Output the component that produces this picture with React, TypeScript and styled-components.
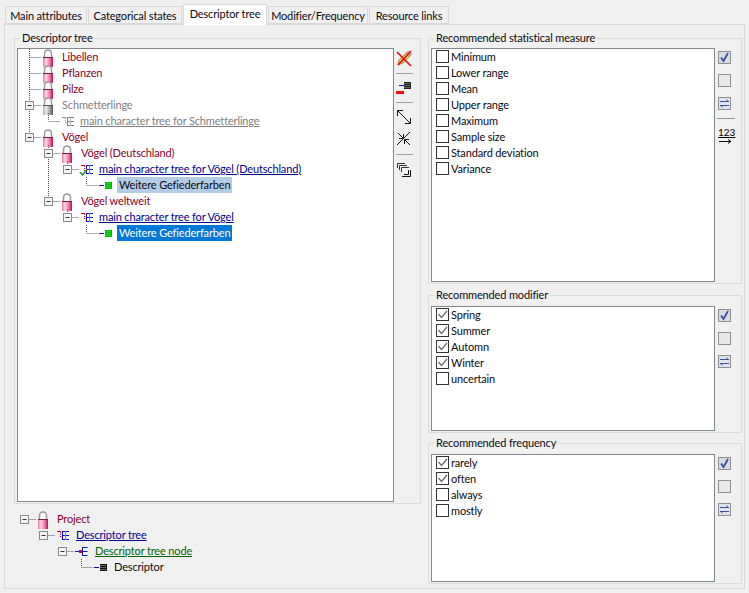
import React, { useId } from 'react';
import styled, { createGlobalStyle } from 'styled-components';

const GlobalStyle = createGlobalStyle`
  html, body { margin: 0; padding: 0; background: #f0f0f0; }
  body { font-family: Lato, "Liberation Sans", sans-serif; font-size: 11px; letter-spacing: -0.15px; color: #0a0a14; overflow: hidden; }
`;

const Window = styled.div`
  width: 749px;
  height: 593px;
  padding: 3px 4px 0 4px;
  box-sizing: border-box;
  background: #f0f0f0;
`;

const TabStrip = styled.div`
  display: flex;
  align-items: flex-end;
  height: 21px;
  padding-left: 1px;
  position: relative;
  z-index: 1;
`;

const Tab = styled.div<{ $active?: boolean; $width: number }>`
  width: ${(p) => p.$width}px;
  height: ${(p) => (p.$active ? 21 : 18)}px;
  line-height: ${(p) => (p.$active ? 18 : 17)}px;
  text-align: center;
  box-sizing: border-box;
  flex: none;
  border: 1px solid #d9d9d9;
  border-bottom: ${(p) => (p.$active ? 'none' : '1px solid #d9d9d9')};
  margin-right: 1px;
  background: ${(p) => (p.$active ? '#ffffff' : '#f0f0f0')};
  white-space: nowrap;
  margin-bottom: ${(p) => (p.$active ? -1 : 0)}px;
`;

const TabPanel = styled.div`
  width: 741px;
  height: 565px;
  box-sizing: border-box;
  border: 1px solid #d9d9d9;
  display: grid;
  grid-template-columns: 407px 314px;
  column-gap: 7px;
  padding: 13px 3px 0 9px;
  align-items: start;
`;

const Column = styled.div`
  display: flex;
  flex-direction: column;
`;

const Group = styled.section<{ $height: number; $after?: number }>`
  height: ${(p) => p.$height}px;
  margin-bottom: ${(p) => p.$after ?? 0}px;
  box-sizing: border-box;
  border: 1px solid #dcdcdc;
  display: flex;
  flex-direction: column;
`;

const GroupTitle = styled.div`
  align-self: flex-start;
  margin: -8px 0 0 5px;
  padding: 0 2px;
  height: 16px;
  line-height: 14px;
  background: #f0f0f0;
`;

const GroupBody = styled.div<{ $pad?: number }>`
  flex: 1;
  min-height: 0;
  display: flex;
  padding: ${(p) => p.$pad ?? 1}px 0 1px 2px;
`;

const TreeBox = styled.div`
  flex: 1;
  background: #fff;
  border: 1px solid #828790;
  padding-left: 5px;
  min-width: 0;
`;

const LowerTree = styled.div`
  margin-top: 7px;
  padding-left: 4px;
`;

const Row = styled.div`
  display: flex;
  height: 16px;
  align-items: flex-start;
`;

const Gutter = styled.svg`
  flex: none;
  height: 16px;
  display: block;
`;

const IconCell = styled.div<{ $tight?: boolean }>`
  flex: none;
  width: ${(p) => (p.$tight ? 17 : 18)}px;
  height: 16px;
`;

const NodeIcon = styled.svg`
  display: block;
  overflow: visible;
`;

type Tone = 'plain' | 'maroon' | 'gray' | 'blue' | 'muted' | 'green';

const toneColor: Record<Tone, string> = {
  plain: '#0a0a14',
  maroon: '#85002d',
  gray: '#808080',
  blue: '#00008b',
  muted: '#808080',
  green: '#006400',
};

const Label = styled.span<{ $tone: Tone; $select?: 'focus' | 'blur' }>`
  display: block;
  height: 16px;
  line-height: 16px;
  padding: 0 2px;
  white-space: nowrap;
  color: ${(p) => (p.$select === 'focus' ? '#fff' : toneColor[p.$tone])};
  background: ${(p) =>
    p.$select === 'focus' ? '#0078d7' : p.$select === 'blur' ? '#b4cde6' : 'transparent'};
  text-decoration: ${(p) =>
    p.$tone === 'blue' || p.$tone === 'green' || p.$tone === 'muted' ? 'underline' : 'none'};
`;

const ToolBar = styled.div`
  flex: none;
  width: 26px;
  padding: 2px 0 0 2px;
  box-sizing: border-box;
  display: flex;
  flex-direction: column;
  align-items: flex-start;
  gap: 6px;
`;

const ToolRule = styled.div<{ $loose?: boolean }>`
  width: 17px;
  height: 1px;
  background: #a0a0a0;
  margin: ${(p) => (p.$loose ? '1px 0' : '0')};
`;

const ToolIcon = styled.svg`
  display: block;
  flex: none;
`;

const CheckList = styled.div`
  flex: 1;
  min-width: 0;
  background: #fff;
  border: 1px solid #828790;
  padding: 0 0 0 4px;
`;

const CheckRow = styled.div`
  display: flex;
  align-items: flex-start;
  height: 16px;
  line-height: 15px;
  gap: 2px;
`;

const CheckBox = styled.span`
  width: 13px;
  height: 13px;
  margin-top: 1px;
  box-sizing: border-box;
  border: 1px solid #333;
  background: #fff;
  flex: none;
  display: block;
`;

const SideBar = styled.div`
  flex: none;
  width: 26px;
  padding: 3px 0 0 3px;
  box-sizing: border-box;
  display: flex;
  flex-direction: column;
  align-items: flex-start;
  gap: 10px;
`;

const SideButton = styled.button<{ $fill: string }>`
  width: 13px;
  height: 13px;
  padding: 0;
  border: 1px solid #8f8f8f;
  background: ${(p) => p.$fill};
  display: block;
  flex: none;
  box-sizing: border-box;
`;

const SideRule = styled.div`
  width: 18px;
  height: 1px;
  margin: -2px 0 -2px -1px;
  background: #8f9a9a;
`;

const NumberTool = styled.div`
  width: 16px;
  font-size: 10px;
  line-height: 10px;
  letter-spacing: 0;
  color: #000;
  text-decoration: underline;
`;

const Lock = ({ muted }: { muted?: boolean }) => {
  const body = useId();
  return (
    <NodeIcon width="12" height="18" viewBox="0 0 12 18">
      <defs>
        <linearGradient id={body} x1="0" y1="0" x2="1" y2="0">
          <stop offset="0" stopColor={muted ? '#b0b0b0' : '#e87aa8'} />
          <stop offset="0.3" stopColor={muted ? '#ececec' : '#fbd8e6'} />
          <stop offset="0.7" stopColor={muted ? '#a0a0a0' : '#f070a5'} />
          <stop offset="1" stopColor={muted ? '#505050' : '#b01050'} />
        </linearGradient>
      </defs>
      <path d="M2.5 9V5C2.5 2.5 4 1 6 1s3.5 1.5 3.5 4v4" fill="#fff" stroke="#9a9a9a" strokeWidth="1.5" />
      <rect x="1" y="8" width="10" height="10" fill={`url(#${body})`} />
      <rect x="1" y="8" width="10" height="1" fill={muted ? '#555' : '#7a2040'} />
    </NodeIcon>
  );
};

const TreeGlyph = ({ muted, check }: { muted?: boolean; check?: boolean }) => {
  const red = muted ? '#9a9a9a' : '#e0002a';
  const blue = muted ? '#808080' : '#1010c8';
  return (
    <NodeIcon width="13" height="16" viewBox="0 0 13 16">
      <path d="M1 4.5h4" stroke={red} fill="none" />
      <path d="M4.5 5v5h2" stroke={red} strokeDasharray="1 1" fill="none" />
      <path d="M6.5 4.5h6.5M6.5 4v9M6.5 8.5h6.5M6.5 12.5h6.5" stroke={blue} fill="none" />
      <path d="M9.5 4v9" stroke={muted ? '#b0b0b0' : '#8080e0'} fill="none" />
      {check && <path d="M0 11l2.5 3L7 8.5" stroke="#2a9a3a" strokeWidth="1.5" fill="none" />}
    </NodeIcon>
  );
};

const BranchGlyph = () => (
  <NodeIcon width="13" height="16" viewBox="0 0 13 16">
    <path d="M0 8.5h7" stroke="#1010c8" fill="none" />
    <path d="M7.5 4v9M7.5 4.5h5M7.5 12.5h5M7.5 8.5h5" stroke="#1010c8" fill="none" />
    <rect x="4" y="7" width="3" height="3" fill="#d00020" />
  </NodeIcon>
);

const LeafGlyph = ({ color }: { color: 'green' | 'black' }) => (
  <NodeIcon width="13" height="16" viewBox="0 0 13 16">
    <path d="M0 8.5h5" stroke="#1010a0" fill="none" />
    <rect x="6" y="5" width="7" height="7" fill={color === 'green' ? '#00c000' : '#111'} />
    <path
      d="M6.5 6.5h6M6.5 8.5h6M6.5 10.5h6"
      stroke={color === 'green' ? '#50e050' : '#bbb'}
      strokeDasharray="1 1"
      fill="none"
    />
  </NodeIcon>
);

const dot = { stroke: '#555', strokeDasharray: '1 1', fill: 'none' };

const LINE_STEP = 19;

type TreeLinesProps = { level: number; guides?: number[]; last?: boolean; expander?: boolean; noStem?: boolean };

// the dotted connectors of one row, plus its [-] box
const TreeLines = ({ level, guides = [], last, expander, noStem }: TreeLinesProps) => {
  const cx = (l: number) => 6.5 + l * LINE_STEP;
  const x = cx(level);
  const width = x + 12.5;
  return (
    <Gutter width={width} viewBox={`0 0 ${width} 16`}>
      {guides.map((g) => (
        <path key={g} d={`M${cx(g)} 0v16`} {...dot} />
      ))}
      {!noStem && <path d={`M${x} 0v${last ? 8 : 16}`} {...dot} />}
      <path d={`M${x} 8.5h11`} {...dot} />
      {expander && (
        <>
          <rect x={x - 4} y="4.5" width="8" height="8" fill="#f4f4f4" stroke="#8a8a8a" />
          <path d={`M${x - 2} 8.5h4`} stroke="#333" fill="none" />
        </>
      )}
    </Gutter>
  );
};

type TreeRowProps = TreeLinesProps & {
  icon: React.ReactNode;
  text: string;
  tone: Tone;
  select?: 'focus' | 'blur';
  tight?: boolean;
};

const TreeRow = ({ icon, text, tone, select, tight, ...lines }: TreeRowProps) => (
  <Row>
    <TreeLines {...lines} />
    <IconCell $tight={tight}>{icon}</IconCell>
    <Label $tone={tone} $select={select}>
      {text}
    </Label>
  </Row>
);

const EraseIcon = () => (
  <ToolIcon width="17" height="17" viewBox="0 0 17 17">
    <path d="M2 15l1-5 7-7 4 3-7 7z" fill="#f0c860" stroke="#b08a30" />
    <path d="M10 3l2-2 4 3-2 2z" fill="#e8a0a0" stroke="#a07070" strokeWidth="0.5" />
    <path d="M1 2l14 14M15 1L2 15" stroke="#e01010" strokeWidth="1.6" />
  </ToolIcon>
);

const RemoveLeafIcon = () => (
  <ToolIcon width="16" height="16" viewBox="0 0 16 16">
    <path d="M3 5.5h5" stroke="#1010c0" />
    <rect x="8" y="2" width="7" height="7" fill="#222" />
    <path d="M8.5 3.5h6M8.5 5.5h6M8.5 7.5h6" stroke="#aaa" strokeDasharray="1 1" />
    <path d="M0 12.5h8" stroke="#f01010" strokeWidth="3" />
  </ToolIcon>
);

const ExpandIcon = () => (
  <ToolIcon width="16" height="16" viewBox="0 0 16 16">
    <path d="M2 2l12 12M1.5 7V1.5H7M14.5 9v5.5H9" stroke="#111" fill="none" />
  </ToolIcon>
);

const CollapseIcon = () => (
  <ToolIcon width="16" height="16" viewBox="0 0 16 16">
    <path d="M2 2l5 5M14 14L9 9M3 7.5h4.5V3M13 8.5H8.5V13M1 14L14 1" stroke="#111" fill="none" />
  </ToolIcon>
);

const CascadeIcon = () => (
  <ToolIcon width="16" height="16" viewBox="0 0 16 16">
    <path d="M1.5 6V1.5H9M3.5 8V3.5H11M5.5 10V5.5H13" stroke="#333" fill="none" />
    <path d="M6 14.5h8.5V8M8 12.5h4.5V8" stroke="#111" fill="none" />
  </ToolIcon>
);

const SideIcon = styled.svg`
  display: block;
`;

const ArrowIcon = styled(SideIcon)`
  margin-top: 2px;
`;

const SideButtons = ({ number }: { number?: boolean }) => (
  <SideBar>
    <SideButton $fill="#d8dce4">
      <SideIcon width="11" height="11" viewBox="0 0 11 11">
        <path d="M2 5.5l2.5 3.5L9 1" stroke="#3a5098" strokeWidth="1.8" fill="none" />
      </SideIcon>
    </SideButton>
    <SideButton $fill="#e8e8e8" />
    <SideButton $fill="#dfe4ec">
      <SideIcon width="11" height="11" viewBox="0 0 11 11">
        <path d="M1 3.5h9M7.5 1.5l2 2M10 7.5H1M3.5 9.5l-2-2" stroke="#3a5098" fill="none" />
      </SideIcon>
    </SideButton>
    {number && (
      <>
        <SideRule />
        <NumberTool>
          123
          <ArrowIcon width="16" height="5" viewBox="0 0 16 5">
            <path d="M1 2.5h12M10 .5l3 2-3 2" stroke="#111" fill="none" />
          </ArrowIcon>
        </NumberTool>
      </>
    )}
  </SideBar>
);

const CheckMark = styled.svg`
  display: block;
`;

const Item = ({ text, checked }: { text: string; checked?: boolean }) => (
  <CheckRow>
    <CheckBox>
      {checked && (
        <CheckMark width="11" height="11" viewBox="0 0 11 11">
          <path d="M1.5 5l3 3.5L10 2" stroke="#6a6a6a" strokeWidth="1.3" fill="none" />
        </CheckMark>
      )}
    </CheckBox>
    {text}
  </CheckRow>
);

const tabs = [
  { name: 'Main attributes', width: 82 },
  { name: 'Categorical states', width: 94 },
  { name: 'Descriptor tree', width: 84, active: true },
  { name: 'Modifier/Frequency', width: 100 },
  { name: 'Resource links', width: 80 },
];

const measures = ['Minimum', 'Lower range', 'Mean', 'Upper range', 'Maximum', 'Sample size', 'Standard deviation', 'Variance'];

export default function App() {
  return (
    <Window>
      <GlobalStyle />
      <TabStrip>
        {tabs.map((t) => (
          <Tab key={t.name} $active={t.active} $width={t.width}>
            {t.name}
          </Tab>
        ))}
      </TabStrip>
      <TabPanel>
        <Column>
          <Group $height={466}>
            <GroupTitle>Descriptor tree</GroupTitle>
            <GroupBody>
              <TreeBox>
                <TreeRow level={0} icon={<Lock />} text="Libellen" tone="maroon" />
                <TreeRow level={0} icon={<Lock />} text="Pflanzen" tone="maroon" />
                <TreeRow level={0} icon={<Lock />} text="Pilze" tone="maroon" />
                <TreeRow level={0} expander icon={<Lock muted />} text="Schmetterlinge" tone="gray" />
                <TreeRow level={1} guides={[0]} last tight icon={<TreeGlyph muted />} text="main character tree for Schmetterlinge" tone="muted" />
                <TreeRow level={0} last expander icon={<Lock />} text="Vögel" tone="maroon" />
                <TreeRow level={1} expander icon={<Lock />} text="Vögel (Deutschland)" tone="maroon" />
                <TreeRow level={2} guides={[1]} last expander tight icon={<TreeGlyph check />} text="main character tree for Vögel (Deutschland)" tone="blue" />
                <TreeRow level={3} guides={[1]} last icon={<LeafGlyph color="green" />} text="Weitere Gefiederfarben" tone="plain" select="blur" />
                <TreeRow level={1} last expander icon={<Lock />} text="Vögel weltweit" tone="maroon" />
                <TreeRow level={2} last expander tight icon={<TreeGlyph />} text="main character tree for Vögel" tone="blue" />
                <TreeRow level={3} last icon={<LeafGlyph color="green" />} text="Weitere Gefiederfarben" tone="plain" select="focus" />
              </TreeBox>
              <ToolBar>
                <EraseIcon />
                <ToolRule />
                <RemoveLeafIcon />
                <ToolRule />
                <ExpandIcon />
                <CollapseIcon />
                <ToolRule $loose />
                <CascadeIcon />
              </ToolBar>
            </GroupBody>
          </Group>
          <LowerTree>
            <TreeRow level={0} noStem expander icon={<Lock />} text="Project" tone="maroon" />
            <TreeRow level={1} noStem expander icon={<TreeGlyph />} text="Descriptor tree" tone="blue" />
            <TreeRow level={2} noStem expander icon={<BranchGlyph />} text="Descriptor tree node" tone="green" />
            <TreeRow level={3} last icon={<LeafGlyph color="black" />} text="Descriptor" tone="plain" />
          </LowerTree>
        </Column>
        <Column>
          <Group $height={246} $after={11}>
            <GroupTitle>Recommended statistical measure</GroupTitle>
            <GroupBody>
              <CheckList>
                {measures.map((m) => (
                  <Item key={m} text={m} />
                ))}
              </CheckList>
              <SideButtons number />
            </GroupBody>
          </Group>
          <Group $height={138} $after={10}>
            <GroupTitle>Recommended modifier</GroupTitle>
            <GroupBody $pad={2}>
              <CheckList>
                <Item text="Spring" checked />
                <Item text="Summer" checked />
                <Item text="Automn" checked />
                <Item text="Winter" checked />
                <Item text="uncertain" />
              </CheckList>
              <SideButtons />
            </GroupBody>
          </Group>
          <Group $height={141}>
            <GroupTitle>Recommended frequency</GroupTitle>
            <GroupBody $pad={2}>
              <CheckList>
                <Item text="rarely" checked />
                <Item text="often" checked />
                <Item text="always" />
                <Item text="mostly" />
              </CheckList>
              <SideButtons />
            </GroupBody>
          </Group>
        </Column>
      </TabPanel>
    </Window>
  );
}
